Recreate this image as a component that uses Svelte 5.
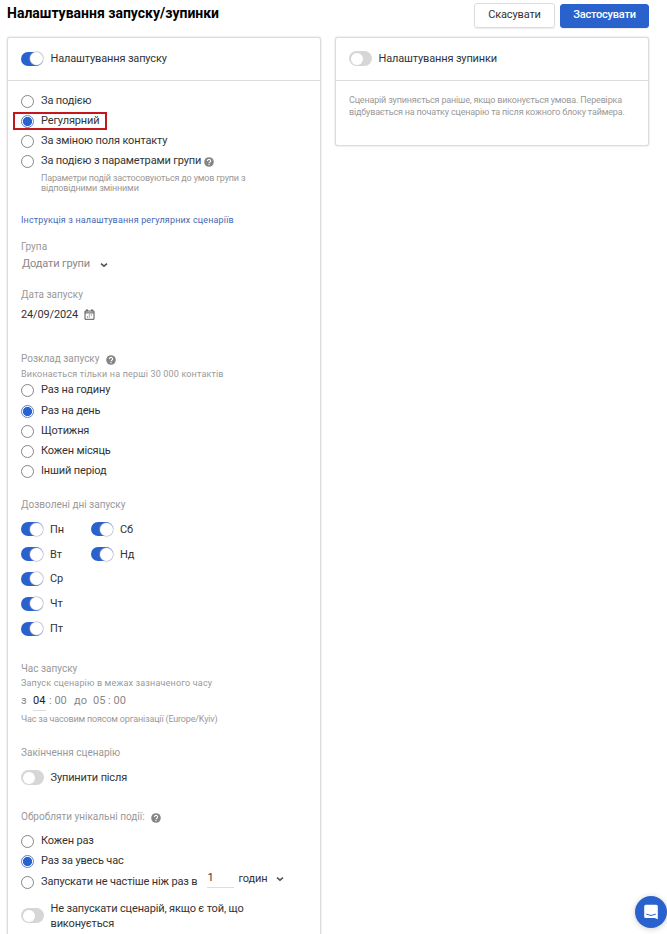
<script lang="ts">
  type Option = { id: string; label: string; help?: boolean };

  const triggers: Option[] = [
    { id: "event", label: "За подією" },
    { id: "regular", label: "Регулярний" },
    { id: "field", label: "За зміною поля контакту" },
    { id: "group", label: "За подією з параметрами групи", help: true },
  ];
  const periods: Option[] = [
    { id: "hour", label: "Раз на годину" },
    { id: "day", label: "Раз на день" },
    { id: "week", label: "Щотижня" },
    { id: "month", label: "Кожен місяць" },
    { id: "other", label: "Інший період" },
  ];
  const frequencies: Option[] = [
    { id: "every", label: "Кожен раз" },
    { id: "once", label: "Раз за увесь час" },
    { id: "limit", label: "Запускати не частіше ніж раз в" },
  ];

  let trigger = $state("regular");
  let period = $state("day");
  let frequency = $state("once");
  let startEnabled = $state(true);
  let stopEnabled = $state(false);
  let stopAfter = $state(false);
  let skipRunning = $state(false);
  let days = $state([
    { label: "Пн", on: true },
    { label: "Вт", on: true },
    { label: "Ср", on: true },
    { label: "Чт", on: true },
    { label: "Пт", on: true },
    { label: "Сб", on: true },
    { label: "Нд", on: true },
  ]);
</script>

{#snippet toggle(on: boolean, flip: () => void, label: string)}
  <button class="toggle" class:on role="switch" aria-checked={on} aria-label={label} onclick={flip}>
    <span class="knob"></span>
  </button>
{/snippet}

{#snippet radio(option: Option, checked: boolean, select: () => void)}
  <button class="radio" role="radio" aria-checked={checked} onclick={select}>
    <span class="circle" class:checked></span>
    <span class="radio-label">{option.label}</span>
    {#if option.help}{@render help()}{/if}
  </button>
{/snippet}

{#snippet help()}
  <svg class="help" viewBox="0 0 10 10" width="10" height="10" aria-hidden="true">
    <circle cx="5" cy="5" r="4.8" fill="#858585" />
    <path d="M3.4 4a1.6 1.5 0 1 1 2.6 1.1C5.4 5.5 5 5.7 5 6.3" fill="none" stroke="#fff" stroke-width="1.1" />
    <rect x="4.4" y="7" width="1.2" height="1.1" fill="#fff" />
  </svg>
{/snippet}

{#snippet chevron()}
  <svg class="chevron" viewBox="0 0 8 6" width="8" height="6" aria-hidden="true">
    <path d="M1 1.6 4 4.2l3-2.6" fill="none" stroke="#555" stroke-width="1.6" />
  </svg>
{/snippet}

<div class="page">
  <header>
    <h1>Налаштування запуску/зупинки</h1>
    <div class="actions">
      <button class="btn">Скасувати</button>
      <button class="btn primary">Застосувати</button>
    </div>
  </header>

  <main>
    <section class="card start">
      <div class="card-head">
        {@render toggle(startEnabled, () => (startEnabled = !startEnabled), "Налаштування запуску")}
        <span class="head-label">Налаштування запуску</span>
      </div>
      <div class="card-body">
        <div class="group triggers" role="radiogroup">
          {#each triggers as option}
            <div class="option" class:marked={option.id === "regular"}>
              {@render radio(option, trigger === option.id, () => (trigger = option.id))}
            </div>
          {/each}
          <p class="hint trigger-hint">
            Параметри подій застосовуються до умов групи з<br />відповідними змінними
          </p>
        </div>

        <a class="guide" href="#guide">Інструкція з налаштування регулярних сценаріїв</a>

        <div class="group audience">
          <div class="caption">Група</div>
          <button class="select">Додати групи {@render chevron()}</button>
        </div>

        <div class="group date">
          <div class="caption">Дата запуску</div>
          <div class="date-value">
            <span>24/09/2024</span>
            <svg viewBox="0 0 11 11" width="11" height="11" aria-hidden="true">
              <path d="M1 2h9v8.3H1zM1 3.9h9" fill="none" stroke="#555" />
              <path d="M3 .3v2M8 .3v2" stroke="#444" stroke-width="1.2" />
              <path d="M4.8 6h1m1 0h1M3 8h1m.8 0h1" stroke="#555" />
            </svg>
          </div>
        </div>

        <div class="group schedule">
          <div class="caption">Розклад запуску {@render help()}</div>
          <p class="note">Виконається тільки на перші 30 000 контактів</p>
          <div role="radiogroup">
            {#each periods as option}
              <div class="option">
                {@render radio(option, period === option.id, () => (period = option.id))}
              </div>
            {/each}
          </div>
        </div>

        <div class="group weekdays">
          <div class="caption">Дозволені дні запуску</div>
          <div class="days">
            {#each days as day}
              <div class="day">
                {@render toggle(day.on, () => (day.on = !day.on), day.label)}
                <span>{day.label}</span>
              </div>
            {/each}
          </div>
        </div>

        <div class="group time">
          <div class="caption">Час запуску</div>
          <p class="note">Запуск сценарію в межах зазначеного часу</p>
          <div class="range">
            <span class="from">з</span>
            <span class="hour">04</span>
            <span class="minutes">: 00</span>
            <span class="to">до</span>
            <span>05 : 00</span>
          </div>
          <p class="hint zone">Час за часовим поясом організації (Europe/Kyiv)</p>
        </div>

        <div class="group ending">
          <div class="caption">Закінчення сценарію</div>
          <div class="switch-row">
            {@render toggle(stopAfter, () => (stopAfter = !stopAfter), "Зупинити після")}
            <span>Зупинити після</span>
          </div>
        </div>

        <div class="group unique">
          <div class="caption">Обробляти унікальні події: {@render help()}</div>
          <div class="frequencies" role="radiogroup">
            {#each frequencies as option}
              <div class="option">
                {@render radio(option, frequency === option.id, () => (frequency = option.id))}
                {#if option.id === "limit"}
                  <span class="count">1</span>
                  <button class="unit">годин {@render chevron()}</button>
                {/if}
              </div>
            {/each}
          </div>
          <div class="switch-row skip">
            {@render toggle(skipRunning, () => (skipRunning = !skipRunning), "Не запускати сценарій")}
            <span>Не запускати сценарій, якщо є той, що<br />виконується</span>
          </div>
        </div>
      </div>
    </section>

    <section class="card stop">
      <div class="card-head">
        {@render toggle(stopEnabled, () => (stopEnabled = !stopEnabled), "Налаштування зупинки")}
        <span class="head-label">Налаштування зупинки</span>
      </div>
      <p class="stop-text">
        Сценарій зупиняється раніше, якщо виконується умова. Перевірка<br />відбувається на початку сценарію та після кожного блоку таймера.
      </p>
    </section>
  </main>

  <button class="chat" aria-label="Чат">
    <svg viewBox="0 0 16 16" width="16" height="16" aria-hidden="true">
      <path d="M2.8.7h10.4q1.6 0 1.6 1.6v13L11.7 14H2.8q-1.6 0-1.6-1.6V2.3Q1.2.7 2.8.7z" fill="#fff" />
      <path d="M3.6 10.3q4.4 2.6 8.8 0" fill="none" stroke="#2962cc" stroke-linecap="round" />
    </svg>
  </button>
</div>

<style>
  :global(body) {
    background: #fff;
  }
  .page {
    box-sizing: border-box;
    height: 934px;
    overflow: hidden;
    position: relative;
    font-family: Roboto, "Liberation Sans", sans-serif;
    font-size: 11px;
    letter-spacing: -0.15px;
    color: #333;
  }
  .page * {
    box-sizing: border-box;
  }
  button {
    margin: 0;
    padding: 0;
    border: 0;
    background: none;
    font: inherit;
    letter-spacing: inherit;
    color: inherit;
    white-space: nowrap;
    cursor: pointer;
  }
  p {
    margin: 0;
    white-space: nowrap;
  }
  svg {
    display: block;
    flex: none;
  }

  header {
    display: flex;
    justify-content: space-between;
    height: 37px;
    padding: 3px 18px 0 7px;
  }
  h1 {
    margin: 0;
    font-size: 14px;
    font-weight: 700;
    letter-spacing: 0;
    line-height: 21px;
    color: #000;
    white-space: nowrap;
  }
  .actions {
    display: flex;
    gap: 5px;
  }
  .btn {
    width: 81px;
    height: 25px;
    border: 1px solid #ddd;
    border-radius: 3px;
    box-shadow: 0 1px 1px rgba(0, 0, 0, 0.08);
    line-height: 22px;
    padding-bottom: 1px;
  }
  .btn.primary {
    width: 89px;
    height: 24px;
    margin-top: 1px;
    padding-bottom: 2px;
    border-color: #2962cc;
    background: #2962cc;
    color: #fff;
    font-weight: 500;
    letter-spacing: -0.2px;
    line-height: 20px;
  }

  main {
    display: flex;
    align-items: flex-start;
    gap: 14px;
    padding-left: 7px;
  }
  .card {
    width: 314px;
    border: 1px solid #dcdcdc;
    border-radius: 3px;
    box-shadow: 0 0 2px rgba(0, 0, 0, 0.2);
    background: #fff;
  }
  .start {
    height: 920px;
  }
  .stop {
    height: 109px;
  }
  .card-head {
    display: flex;
    align-items: center;
    gap: 6.5px;
    height: 43px;
    padding: 0 0 1px 13px;
    border-bottom: 1px solid #dcdcdc;
  }
  .card-body {
    padding: 10px 0 0 13px;
  }
  .stop-text {
    padding: 13px 0 0 13px;
    font-size: 9px;
    letter-spacing: -0.17px;
    line-height: 12px;
    color: #999;
  }

  .toggle {
    display: block;
    flex: none;
    width: 23px;
    height: 15px;
    padding: 1.5px;
    border-radius: 8px;
    background: #d6d6d6;
  }
  .toggle.on {
    width: 22px;
    height: 14px;
    margin-right: 1px;
    padding: 0.5px;
    background: #2962cc;
  }
  .knob {
    display: block;
    width: 12px;
    height: 12px;
    border-radius: 50%;
    background: #fff;
  }
  .on .knob {
    width: 13px;
    height: 13px;
    margin-left: auto;
    box-shadow: 0 0 1px 0.5px #aab;
  }

  .option {
    display: flex;
    align-items: center;
    height: 20.15px;
  }
  .radio {
    display: flex;
    align-items: center;
    height: 20px;
  }
  .circle {
    width: 13px;
    height: 13px;
    margin-top: 1px;
    border: 1px solid #858585;
    border-radius: 50%;
  }
  .circle.checked {
    border-color: #5c7fc4;
    background: radial-gradient(circle, #2962cc 4.2px, #fff 5px);
  }
  .radio-label {
    margin-left: 7px;
    padding-bottom: 1px;
  }
  .radio .help {
    margin: 1px 0 0 3px;
  }
  .marked {
    width: 94px;
    height: 18px;
    margin: 1px 0 1px -8px;
    padding-left: 6px;
    border: 2px solid #c4161c;
  }
  .triggers {
    height: 102px;
  }
  .trigger-hint {
    margin: 2px 0 0 20px;
  }
  .hint {
    font-size: 9px;
    letter-spacing: -0.17px;
    line-height: 10px;
    color: #999;
  }
  .guide {
    display: block;
    margin-top: 21px;
    font-size: 9px;
    letter-spacing: 0.16px;
    line-height: 12px;
    color: #4668b3;
    text-decoration: none;
    white-space: nowrap;
  }
  .caption {
    display: flex;
    align-items: center;
    height: 14px;
    padding-bottom: 1px;
    font-size: 10px;
    letter-spacing: 0;
    color: #999;
    white-space: nowrap;
  }
  .caption .help {
    margin: 2px 0 0 6px;
  }
  .note {
    font-size: 9px;
    letter-spacing: 0.17px;
    line-height: 14px;
    color: #999;
  }

  .audience {
    margin-top: 14px;
  }
  .select {
    display: flex;
    align-items: center;
    height: 19px;
    padding-left: 1px;
    color: #888;
  }
  .select .chevron {
    margin: 2px 0 0 10px;
  }
  .date {
    margin-top: 15px;
  }
  .date-value {
    display: flex;
    align-items: center;
    gap: 6px;
    height: 24px;
  }
  .schedule {
    margin-top: 26px;
  }
  .schedule .note {
    margin: 1px 0 -0.7px;
  }
  .weekdays {
    margin-top: 16.7px;
  }
  .days {
    display: grid;
    grid-auto-flow: column;
    grid-template-rows: repeat(5, 24.9px);
    grid-auto-columns: 70px;
    margin-top: 5px;
  }
  .day,
  .switch-row {
    display: flex;
    align-items: center;
    gap: 6.5px;
    white-space: nowrap;
  }
  .day {
    gap: 6px;
  }
  .time {
    margin-top: 21px;
  }
  .time .note {
    margin-bottom: 1px;
  }
  .range {
    display: flex;
    height: 20px;
    letter-spacing: 0;
    line-height: 20px;
    color: #888;
    white-space: nowrap;
  }
  .from {
    width: 12px;
  }
  .hour {
    width: 13px;
    border-bottom: 1px solid #ddd;
    color: #222;
  }
  .minutes {
    width: 28px;
    padding-left: 3px;
  }
  .to {
    width: 19px;
  }
  .zone {
    margin-top: 3px;
  }
  .ending {
    margin-top: 22px;
  }
  .switch-row {
    height: 25px;
    margin-top: 5px;
  }
  .unique {
    margin-top: 20px;
  }
  .frequencies {
    margin-top: 7px;
  }
  .count {
    width: 27px;
    height: 18px;
    margin: -6px 0 0 10px;
    border-bottom: 1px solid #ddd;
    line-height: 15px;
  }
  .unit {
    display: flex;
    align-items: center;
    margin: -7px 0 0 4px;
  }
  .unit .chevron {
    margin: 1px 0 0 9px;
  }
  .switch-row.skip {
    height: 30px;
    margin-top: 9px;
    line-height: 15px;
  }

  .chat {
    position: absolute;
    left: 635px;
    top: 896px;
    display: flex;
    align-items: center;
    justify-content: center;
    width: 32px;
    height: 32px;
    border-radius: 50%;
    background: #2962cc;
    box-shadow: 0 1px 6px rgba(0, 0, 0, 0.2);
  }
</style>
